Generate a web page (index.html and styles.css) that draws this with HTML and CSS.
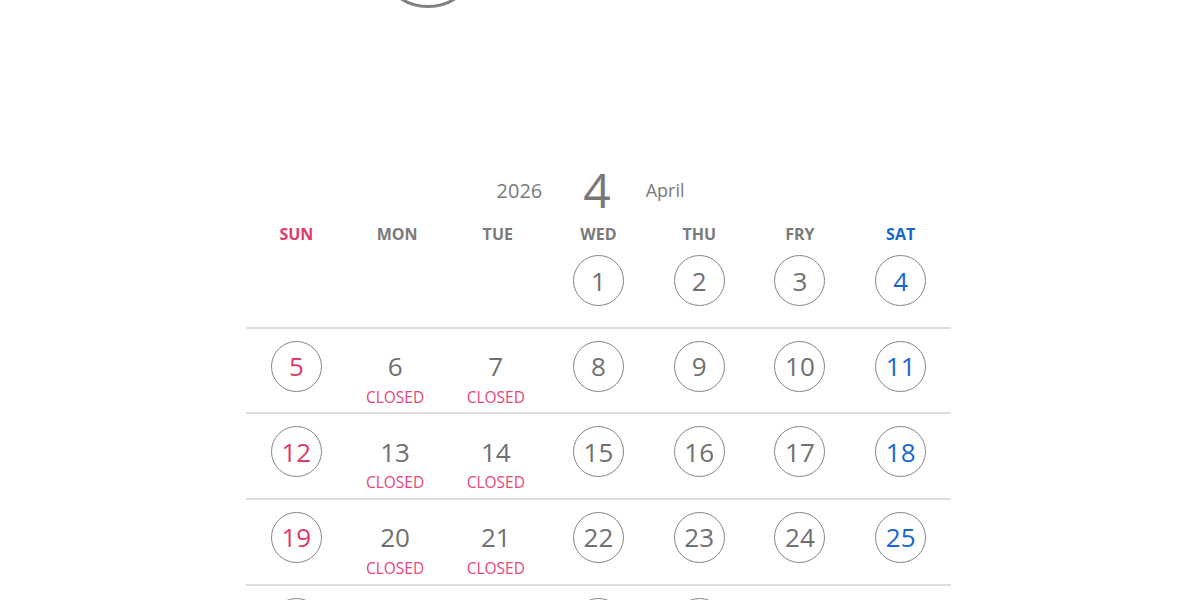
FILE: index.html
```html
<!DOCTYPE html>
<html lang="en">
<head>
<meta charset="utf-8">
<title>Calendar April 2026</title>
<link rel="stylesheet" href="styles.css">
</head>
<body>
<div class="top-mark"></div>
<section class="calendar">
  <div class="cal-head">
    <span class="year">2026</span>
    <span class="month">4</span>
    <span class="month-name">April</span>
  </div>
  <div class="weekdays">
    <div class="wd sun">SUN</div>
    <div class="wd">MON</div>
    <div class="wd">TUE</div>
    <div class="wd">WED</div>
    <div class="wd">THU</div>
    <div class="wd">FRY</div>
    <div class="wd sat">SAT</div>
  </div>
  <div class="week">
    <div class="cell"></div>
    <div class="cell"></div>
    <div class="cell"></div>
    <div class="cell"><span class="day ring">1</span></div>
    <div class="cell"><span class="day ring">2</span></div>
    <div class="cell"><span class="day ring">3</span></div>
    <div class="cell"><span class="day ring sat">4</span></div>
  </div>
  <div class="week">
    <div class="cell"><span class="day ring sun">5</span></div>
    <div class="cell shut"><span class="day">6</span><span class="closed">CLOSED</span></div>
    <div class="cell shut"><span class="day">7</span><span class="closed">CLOSED</span></div>
    <div class="cell"><span class="day ring">8</span></div>
    <div class="cell"><span class="day ring">9</span></div>
    <div class="cell"><span class="day ring">10</span></div>
    <div class="cell"><span class="day ring sat">11</span></div>
  </div>
  <div class="week">
    <div class="cell"><span class="day ring sun">12</span></div>
    <div class="cell shut"><span class="day">13</span><span class="closed">CLOSED</span></div>
    <div class="cell shut"><span class="day">14</span><span class="closed">CLOSED</span></div>
    <div class="cell"><span class="day ring">15</span></div>
    <div class="cell"><span class="day ring">16</span></div>
    <div class="cell"><span class="day ring">17</span></div>
    <div class="cell"><span class="day ring sat">18</span></div>
  </div>
  <div class="week">
    <div class="cell"><span class="day ring sun">19</span></div>
    <div class="cell shut"><span class="day">20</span><span class="closed">CLOSED</span></div>
    <div class="cell shut"><span class="day">21</span><span class="closed">CLOSED</span></div>
    <div class="cell"><span class="day ring">22</span></div>
    <div class="cell"><span class="day ring">23</span></div>
    <div class="cell"><span class="day ring">24</span></div>
    <div class="cell"><span class="day ring sat">25</span></div>
  </div>
  <div class="week">
    <div class="cell"><span class="day ring sun">26</span></div>
    <div class="cell shut"><span class="day">27</span><span class="closed">CLOSED</span></div>
    <div class="cell shut"><span class="day">28</span><span class="closed">CLOSED</span></div>
    <div class="cell"><span class="day ring">29</span></div>
    <div class="cell"><span class="day ring">30</span></div>
    <div class="cell"></div>
    <div class="cell"></div>
  </div>
</section>
</body>
</html>
```
FILE: styles.css
```css
html, body {
  margin: 0;
  padding: 0;
  background: #ffffff;
}

body {
  font-family: "Open Sans", "Liberation Sans", sans-serif;
  color: #707070;
}

.top-mark {
  width: 104px;
  height: 104px;
  box-sizing: border-box;
  margin-top: -96px;
  margin-left: 376px;
  border: 3px solid #808080;
  border-radius: 50%;
}

.calendar {
  width: 705px;
  margin-left: 246px;
  margin-top: 158px;
}

.cal-head {
  display: grid;
  grid-template-columns: 1fr auto 1fr;
  align-items: center;
  height: 48px;
}

.year {
  justify-self: end;
  margin-right: 44px;
  font-size: 20px;
  color: #7a7a7a;
}

.month {
  font-size: 48px;
  line-height: 48px;
  color: #777777;
  margin-left: -3px;
}

.month-name {
  justify-self: start;
  margin-left: 35px;
  font-size: 18px;
  color: #7a7a7a;
}

.weekdays {
  display: grid;
  grid-template-columns: repeat(7, 1fr);
  margin-top: 11px;
}

.wd {
  text-align: center;
  font-size: 16px;
  font-weight: 700;
  line-height: 18px;
  color: #7a7a7a;
}

.wd.sun { color: #e03a6a; }
.wd.sat { color: #1866d4; }

.week {
  display: grid;
  grid-template-columns: repeat(7, 1fr);
  height: 85.67px;
  box-sizing: border-box;
  padding-top: 12px;
  border-bottom: 2px solid #dddddd;
}

.cell {
  display: flex;
  flex-direction: column;
  align-items: center;
}

.cell.shut {
  padding-right: 4px;
}

.day {
  width: 51px;
  height: 51px;
  box-sizing: border-box;
  border: 1.5px solid transparent;
  border-radius: 50%;
  display: flex;
  align-items: center;
  justify-content: center;
  font-size: 26px;
  line-height: 1;
  color: #707070;
}

.day.ring { border-color: #858585; }
.day.sun { color: #e03a6a; }
.day.sat { color: #1866d4; }

.closed {
  margin-top: -3px;
  font-size: 15.5px;
  line-height: 16px;
  color: #e8457a;
}
```
